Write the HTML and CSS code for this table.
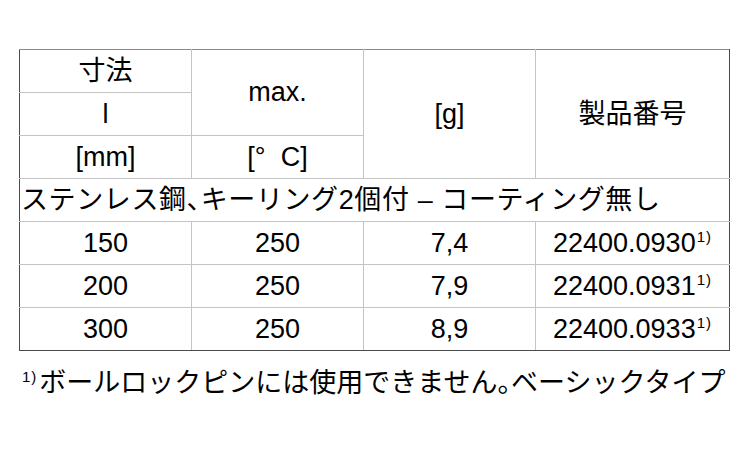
FILE: index.html
```html
<!DOCTYPE html>
<html lang="ja">
<head>
<meta charset="utf-8">
<link rel="stylesheet" href="styles.css">
</head>
<body>
<div class="page">
  <table class="spec">
    <colgroup>
      <col class="c1"><col class="c2"><col class="c3"><col class="c4">
    </colgroup>
    <tr class="h1">
      <td>寸法</td>
      <td rowspan="2">max.</td>
      <td rowspan="3">[g]</td>
      <td rowspan="3">製品番号</td>
    </tr>
    <tr class="h2">
      <td>l</td>
    </tr>
    <tr class="h3">
      <td>[mm]</td>
      <td>[°&nbsp;&nbsp;C]</td>
    </tr>
    <tr class="sec">
      <td colspan="4" class="section">ステンレス鋼<span class="p">、</span>キーリング2個付 – コーティング無し</td>
    </tr>
    <tr class="d">
      <td>150</td><td>250</td><td>7,4</td><td>22400.0930<sup>1)</sup></td>
    </tr>
    <tr class="d">
      <td>200</td><td>250</td><td>7,9</td><td>22400.0931<sup>1)</sup></td>
    </tr>
    <tr class="d last">
      <td>300</td><td>250</td><td>8,9</td><td>22400.0933<sup>1)</sup></td>
    </tr>
  </table>
  <p class="note"><sup>1)</sup>ボールロックピンには使用できません<span class="p">。</span>ベーシックタイプ</p>
</div>
</body>
</html>
```

FILE: styles.css
```css
html, body {
  margin: 0;
  padding: 0;
  background: #ffffff;
}

body {
  font-family: "Liberation Sans", "Noto Sans CJK JP", sans-serif;
  color: #000000;
}

.page {
  padding: 49px 0 0 19px;
}

.spec {
  border-collapse: collapse;
  width: 711px;
  table-layout: fixed;
  font-size: 27px;
}

.c1, .c2, .c3 { width: 172px; }

.spec td {
  border: 1px solid #c4c4c4;
  padding: 0;
  height: 42px;
  text-align: center;
  vertical-align: middle;
  line-height: 1;
  white-space: nowrap;
}

.spec tr:first-child td { border-top: 1px solid #8a8a8a; }
.spec tr td:first-child { border-left: 1px solid #4a4a4a; }
.spec tr td:last-child { border-right: 1px solid #4a4a4a; }
.spec tr.h2 td:last-child,
.spec tr.h3 td:last-child { border-right-color: #c4c4c4; }
.spec tr.last td { border-bottom: 1px solid #4a4a4a; }

.spec td.section {
  text-align: left;
  padding-left: 1px;
  letter-spacing: 0.6px;
  border-right: 1px solid #4a4a4a;
}

.p {
  font-feature-settings: "halt";
}

.spec sup,
.note sup {
  font-size: 15px;
  letter-spacing: 1px;
  vertical-align: 10px;
  line-height: 0;
}

.spec sup {
  margin-left: 1px;
}

.note {
  margin: 19px 0 0 3px;
  font-size: 27px;
  line-height: 1;
}

.note sup {
  margin-right: 2px;
}
```
